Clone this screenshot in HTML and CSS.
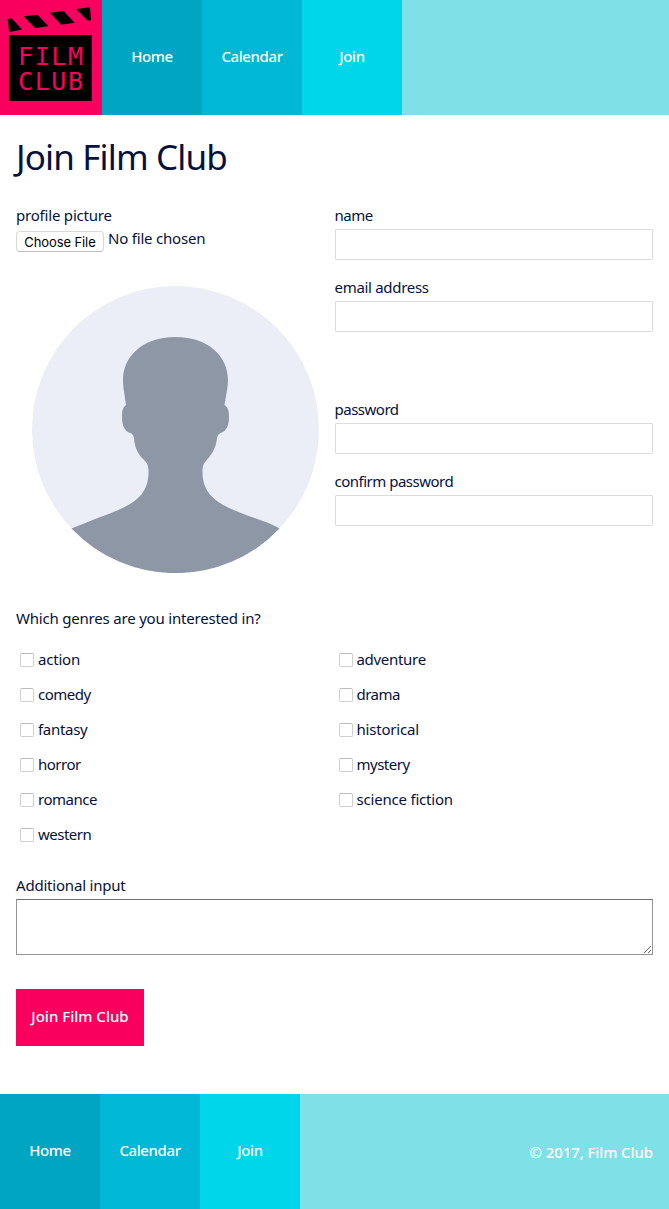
FILE: index.html
```html
<!DOCTYPE html>
<html lang="en">
<head>
<meta charset="utf-8">
<title>Join Film Club</title>
<link rel="stylesheet" href="styles.css">
</head>
<body>
<header class="bar">
  <a class="logo" href="#">
    <svg width="102" height="115" viewBox="0 0 102 115" role="img" aria-label="Film Club">
      <path d="M7.700 19.200L11.600 18L22 29.500L9.200 32ZM23.700 16.200L37.500 14.700L48.500 26L35.200 28.200ZM50 12.700L63.700 11L74.500 22.700L61.200 24.700ZM76.300 9L90 7.200L91 20.200L87.800 20.800Z"/>
      <path d="M9 35H91.700V101H9Z"/>
      <text class="logo-text" x="18" y="64.500" textLength="65">FILM</text>
      <text class="logo-text" x="18" y="89.500" textLength="65">CLUB</text>
    </svg>
  </a>
  <nav class="nav">
    <a class="tab home" href="#">Home</a>
    <a class="tab calendar" href="#">Calendar</a>
    <a class="tab join" href="#">Join</a>
  </nav>
</header>
<main class="main">
  <h1 class="title">Join Film Club</h1>
  <form>
    <div class="columns profile">
      <div>
        <div class="label loose">profile picture</div>
        <div class="file"><button type="button" class="file-button">Choose File</button><span class="loose">No file chosen</span></div>
        <svg class="avatar" viewBox="0 0 287 287" width="287" height="287">
          <circle class="avatar-back" cx="143.5" cy="143.5" r="143.5"/>
          <path class="avatar-person" d="M143.5 51C110 51 91 71 91 94C91 101 93 111 94 119C90 122 90 127 90 131C90 140 93 145 97 146.500C100 147.500 101.500 149 102 152C103 165 108 170 113 175C116 178 116.500 181 116.500 186C116.500 207 105 217 79 227C63 233 51 238 39.500 242.500A143.500 143.500 0 0 0 247.500 242.500C236 236 224 233 209 227C183 217 170.500 207 170.500 186C170.500 181 171 178 174 175C179 169 184 163 185 152C185.500 149 187 147.500 190 146.500C194 145 197 140 197 131C197 127 197 122 192.500 119C194 109 196 101 196 94C196 71 177 51 143.500 51Z"/>
        </svg>
      </div>
      <div class="fields">
        <label class="field label"><span class="tight">name</span><input class="input" type="text"></label>
        <label class="field label email"><span>email address</span><input class="input" type="email"></label>
        <label class="field label"><span class="tight">password</span><input class="input" type="password"></label>
        <label class="field label"><span class="tight">confirm password</span><input class="input" type="password"></label>
      </div>
    </div>
    <p class="question loose">Which genres are you interested in?</p>
    <div class="columns genres">
      <label class="genre"><input class="check" type="checkbox"><span class="loose">action</span></label>
      <label class="genre"><input class="check" type="checkbox"><span>adventure</span></label>
      <label class="genre"><input class="check" type="checkbox"><span class="tight">comedy</span></label>
      <label class="genre"><input class="check" type="checkbox"><span class="tight">drama</span></label>
      <label class="genre"><input class="check" type="checkbox"><span>fantasy</span></label>
      <label class="genre"><input class="check" type="checkbox"><span class="loose">historical</span></label>
      <label class="genre"><input class="check" type="checkbox"><span class="tight">horror</span></label>
      <label class="genre"><input class="check" type="checkbox"><span class="tight">mystery</span></label>
      <label class="genre"><input class="check" type="checkbox"><span class="tight">romance</span></label>
      <label class="genre"><input class="check" type="checkbox"><span class="loose">science fiction</span></label>
      <label class="genre"><input class="check" type="checkbox"><span class="tight">western</span></label>
    </div>
    <label class="label additional"><span class="loose">Additional input</span><textarea class="textarea"></textarea></label>
    <button type="button" class="submit">Join Film Club</button>
  </form>
</main>
<footer class="bar footer">
  <nav class="nav">
    <a class="tab home" href="#">Home</a>
    <a class="tab calendar" href="#">Calendar</a>
    <a class="tab join" href="#">Join</a>
  </nav>
  <span class="copyright">© 2017, Film Club</span>
</footer>
</body>
</html>
```

FILE: styles.css
```css
* { box-sizing: border-box; }
body {
  margin: 0;
  background: #fff;
  color: #06113c;
  font: 15px/24px "Noto Sans", sans-serif;
  letter-spacing: -0.3px;
}
.loose { letter-spacing: -0.2px; }
.tight { letter-spacing: -0.5px; }
.bar { display: flex; height: 115px; background: #7fe0e8; }
.logo { width: 102px; background: #f9005f; }
.logo svg { display: block; }
.logo-text { font: 25px "DejaVu Sans Mono", monospace; fill: #f9005f; letter-spacing: 0; }
.nav { display: flex; }
.tab {
  width: 100px;
  padding-bottom: 4px;
  display: flex;
  align-items: center;
  justify-content: center;
  color: #fff;
  text-decoration: none;
  font-weight: 500;
  letter-spacing: -0.4px;
}
.home { background: #00a6c1; }
.calendar { background: #00b8d5; }
.join { background: #00d6e9; }
.main { padding: 0 16px; height: 979px; }
.title { margin: 0; padding-top: 18px; height: 88px; font-size: 35px; line-height: 48px; font-weight: 400; letter-spacing: -0.85px; }
.columns { display: grid; grid-template-columns: 318.5px 318.5px; }
.profile { height: 400px; }
.label { height: 26px; line-height: 24px; }
.file { display: flex; gap: 4px; height: 23px; line-height: 18px; }
.file-button {
  width: 88px;
  height: 21px;
  margin-top: 2px;
  padding: 0;
  border: 1px solid #d9d9d9;
  border-bottom-color: #bdbdbd;
  border-radius: 4px;
  background: #fff;
  color: #000;
  font: 13px/18px Inter, sans-serif;
  letter-spacing: -0.1px;
}
.avatar { display: block; margin: 34px 0 0 16px; }
.avatar-back { fill: #ebeef6; }
.avatar-person { fill: #8e97a6; }
.field { display: block; height: 72px; }
.email { height: 122px; }
.field span { display: block; height: 26px; }
.input { display: block; width: 100%; height: 31px; border: 1px solid #dcdcdc; border-radius: 1px; background: #fff; }
.question { margin: 0; padding-top: 3px; height: 39px; line-height: 24px; }
.genre { display: flex; align-items: center; height: 35px; padding-left: 4px; gap: 4px; }
.genre span { padding-bottom: 2px; }
.check { appearance: none; width: 14px; height: 14px; margin: 0; border: 1px solid #d0d0d0; border-top-color: #bbb; border-radius: 2px; background: #fff; }
.additional { display: block; padding-top: 21px; height: 137px; }
.additional span { display: block; height: 26px; }
.textarea { display: block; width: 637px; height: 56px; border: 1px solid #959595; border-top-color: #707070; border-radius: 0; background: #fff; }
.submit { display: block; width: 128px; height: 57px; padding: 0 0 3px; border: 0; background: #f9005f; color: #fff; font: 500 15px/24px "Noto Sans", sans-serif; letter-spacing: 0; }
.footer { justify-content: space-between; }
.copyright { padding: 46px 16px 0 0; color: #fff; font-weight: 500; letter-spacing: -0.1px; }
```
